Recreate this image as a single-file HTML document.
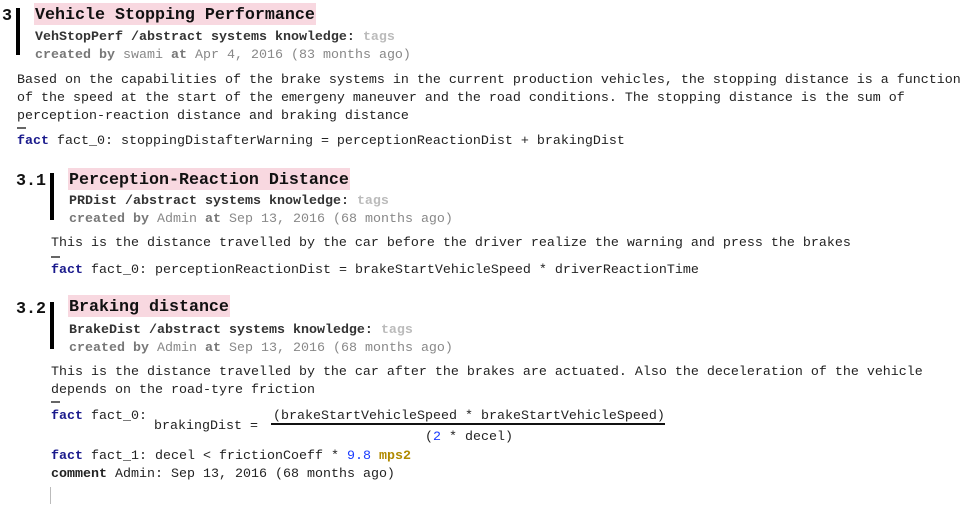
<!DOCTYPE html>
<html><head><meta charset="utf-8"><style>
body{margin:0;width:962px;height:505px;background:#fff;position:relative;overflow:hidden;font-family:"Liberation Mono",monospace;font-size:13.33px;color:#222}
.a{position:absolute;white-space:pre;line-height:16px}
.num{font-weight:bold;font-size:16.67px;color:#111;line-height:20px}
.t{font-weight:bold;font-size:16.67px;color:#111;background:#f8d8e0;line-height:20px;padding:3px 1px 0 1px;height:19px}
.sub{font-weight:bold;color:#333}
.tg{color:#bbb;font-weight:bold}
.cr{color:#888}.cr b{color:#777}
.bar{position:absolute;width:4px;background:#000}
.k{color:#1a1a8c;font-weight:bold}
.dash{position:absolute;width:9px;height:2px;background:#666}
</style></head><body>
<div class="a num" style="left:2px;top:7px">3</div>
<div class="bar" style="left:16px;top:8px;height:47px"></div>
<div class="a t" style="left:34px;top:3px">Vehicle Stopping Performance</div>
<div class="a sub" style="left:35px;top:30px">VehStopPerf /abstract systems knowledge: <span class="tg">tags</span></div>
<div class="a cr" style="left:35px;top:48px"><b>created by</b> swami <b>at</b> Apr 4, 2016 (83 months ago)</div>
<div class="a" style="left:17px;top:73px">Based on the capabilities of the brake systems in the current production vehicles, the stopping distance is a function</div>
<div class="a" style="left:17px;top:91px">of the speed at the start of the emergeny maneuver and the road conditions. The stopping distance is the sum of</div>
<div class="a" style="left:17px;top:109px">perception-reaction distance and braking distance</div>
<div class="dash" style="left:17px;top:127px"></div>
<div class="a" style="left:17px;top:134px"><span class="k">fact</span> fact_0: stoppingDistafterWarning = perceptionReactionDist + brakingDist</div>

<div class="a num" style="left:16px;top:172px">3.1</div>
<div class="bar" style="left:50px;top:173px;height:47px"></div>
<div class="a t" style="left:68px;top:168px">Perception-Reaction Distance</div>
<div class="a sub" style="left:69px;top:194px">PRDist /abstract systems knowledge: <span class="tg">tags</span></div>
<div class="a cr" style="left:69px;top:212px"><b>created by</b> Admin <b>at</b> Sep 13, 2016 (68 months ago)</div>
<div class="a" style="left:51px;top:236px">This is the distance travelled by the car before the driver realize the warning and press the brakes</div>
<div class="dash" style="left:51px;top:256px"></div>
<div class="a" style="left:51px;top:263px"><span class="k">fact</span> fact_0: perceptionReactionDist = brakeStartVehicleSpeed * driverReactionTime</div>

<div class="a num" style="left:16px;top:300px">3.2</div>
<div class="bar" style="left:50px;top:302px;height:47px"></div>
<div class="a t" style="left:68px;top:295px">Braking distance</div>
<div class="a sub" style="left:69px;top:323px">BrakeDist /abstract systems knowledge: <span class="tg">tags</span></div>
<div class="a cr" style="left:69px;top:341px"><b>created by</b> Admin <b>at</b> Sep 13, 2016 (68 months ago)</div>
<div class="a" style="left:51px;top:365px">This is the distance travelled by the car after the brakes are actuated. Also the deceleration of the vehicle</div>
<div class="a" style="left:51px;top:383px">depends on the road-tyre friction</div>
<div class="dash" style="left:51px;top:401px"></div>
<div class="a" style="left:51px;top:409px"><span class="k">fact</span> fact_0:</div>
<div class="a" style="left:154px;top:419px">brakingDist =</div>
<div class="a" style="left:273px;top:409px">(brakeStartVehicleSpeed * brakeStartVehicleSpeed)</div>
<div style="position:absolute;left:271px;top:423px;width:394px;height:2px;background:#111"></div>
<div class="a" style="left:425px;top:430px">(<span style="color:#1a3cff">2</span> * decel)</div>
<div class="a" style="left:51px;top:449px"><span class="k">fact</span> fact_1: decel &lt; frictionCoeff * <span style="color:#1a3cff">9.8</span> <span style="color:#b08a00;font-weight:bold">mps2</span></div>
<div class="a" style="left:51px;top:467px"><b>comment</b> Admin: Sep 13, 2016 (68 months ago)</div>
<div style="position:absolute;left:50px;top:487px;width:1px;height:17px;background:#bbb"></div>
</body></html>
